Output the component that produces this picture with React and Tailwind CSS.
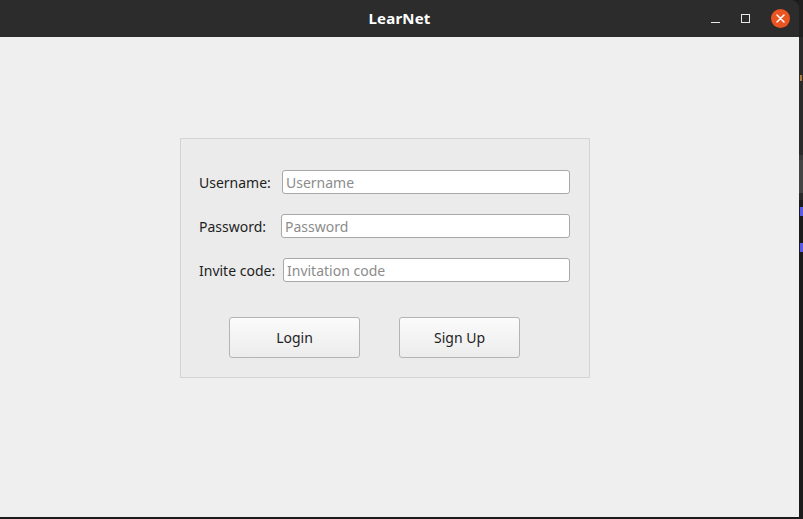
import React, { useState } from "react";

const font = { fontFamily: '"Noto Sans", "Open Sans", sans-serif' };

const fields = [
  { label: "Username:", placeholder: "Username", labelW: "w-[83px]" },
  { label: "Password:", placeholder: "Password", labelW: "w-[82px]" },
  { label: "Invite code:", placeholder: "Invitation code", labelW: "w-[84px]" },
];

const TitleBar = () => (
  <div className="relative h-[37px] shrink-0 bg-[#2c2c2c] rounded-tr-[8px] flex items-center justify-center">
    <span className="text-white text-[15px] font-bold tracking-[0.2px]">LearNet</span>
    <div className="absolute right-[9px] top-0 h-[37px] flex items-center gap-[21px]">
      {/* minimize */}
      <div className="w-[9px] h-[9px] flex items-end">
        <div className="w-[9px] h-[1px] bg-[#e8e8e8]" />
      </div>
      {/* maximize */}
      <div className="w-[9px] h-[9px] border border-[#e8e8e8]" />
      {/* close */}
      <div className="w-[19px] h-[19px] rounded-full bg-[#e95420] flex items-center justify-center">
        <svg width="9" height="9" viewBox="0 0 9 9">
          <path d="M1 1 L8 8 M8 1 L1 8" stroke="#fff" strokeWidth="1.5" strokeLinecap="round" />
        </svg>
      </div>
    </div>
  </div>
);

const Field = ({ label, placeholder, labelW }) => {
  const [value, setValue] = useState("");
  return (
    <div className="flex items-center h-[24px]">
      <label className={`${labelW} shrink-0 text-[14px] text-[#1e1e1e]`}>{label}</label>
      <input
        value={value}
        onChange={(e) => setValue(e.target.value)}
        placeholder={placeholder}
        className="flex-1 h-[24px] bg-white border border-[#a8a8a8] rounded-[3px] px-[3px] text-[14px] text-[#1e1e1e] placeholder:text-[#8c8c8c] outline-none"
        style={font}
      />
    </div>
  );
};

const Button = ({ children, w }) => (
  <button
    className={`${w} h-[41px] rounded-[3px] border border-[#b4b4b4] bg-gradient-to-b from-[#fbfbfb] to-[#ececec] text-[14px] text-[#1e1e1e]`}
    style={font}
  >
    {children}
  </button>
);

export default function App() {
  return (
    <div className="w-[803px] h-[519px] bg-[#1b1b1b] flex overflow-hidden" style={font}>
      <div className="w-[799px] h-[517px] flex flex-col">
        <TitleBar />
        <div className="flex-1 bg-[#efefef] pl-[180px] pt-[101px]">
          <div className="w-[410px] h-[240px] border border-[#d4d4d4] bg-[#ebebeb] pl-[18px] pr-[19px] pt-[31px]">
            <div className="flex flex-col gap-[20px]">
              {fields.map((f) => (
                <Field key={f.label} {...f} />
              ))}
            </div>
            <div className="flex gap-[39px] pl-[30px] mt-[35px]">
              <Button w="w-[131px]">Login</Button>
              <Button w="w-[121px]">Sign Up</Button>
            </div>
          </div>
        </div>
      </div>
      {/* sliver of the window behind */}
      <div className="w-[4px] flex flex-col">
        <div className="h-[37px] bg-[#202020]" />
        <div className="h-[118px] bg-[#2a2a2a] relative">
          <div className="absolute left-[1px] top-[38px] w-[2px] h-[6px] bg-[#b07a3a]" />
        </div>
        <div className="h-[5px] bg-[#3a3a3a]" />
        <div className="h-[33px] bg-[#444444]" />
        <div className="h-[7px] bg-[#2a2a2a]" />
        <div className="flex-1 bg-[#1b1b1b] relative">
          <div className="absolute left-[1px] top-[7px] w-[3px] h-[9px] bg-[#5a5ae6]" />
          <div className="absolute left-[1px] top-[43px] w-[3px] h-[9px] bg-[#5a5ae6]" />
        </div>
      </div>
    </div>
  );
}
